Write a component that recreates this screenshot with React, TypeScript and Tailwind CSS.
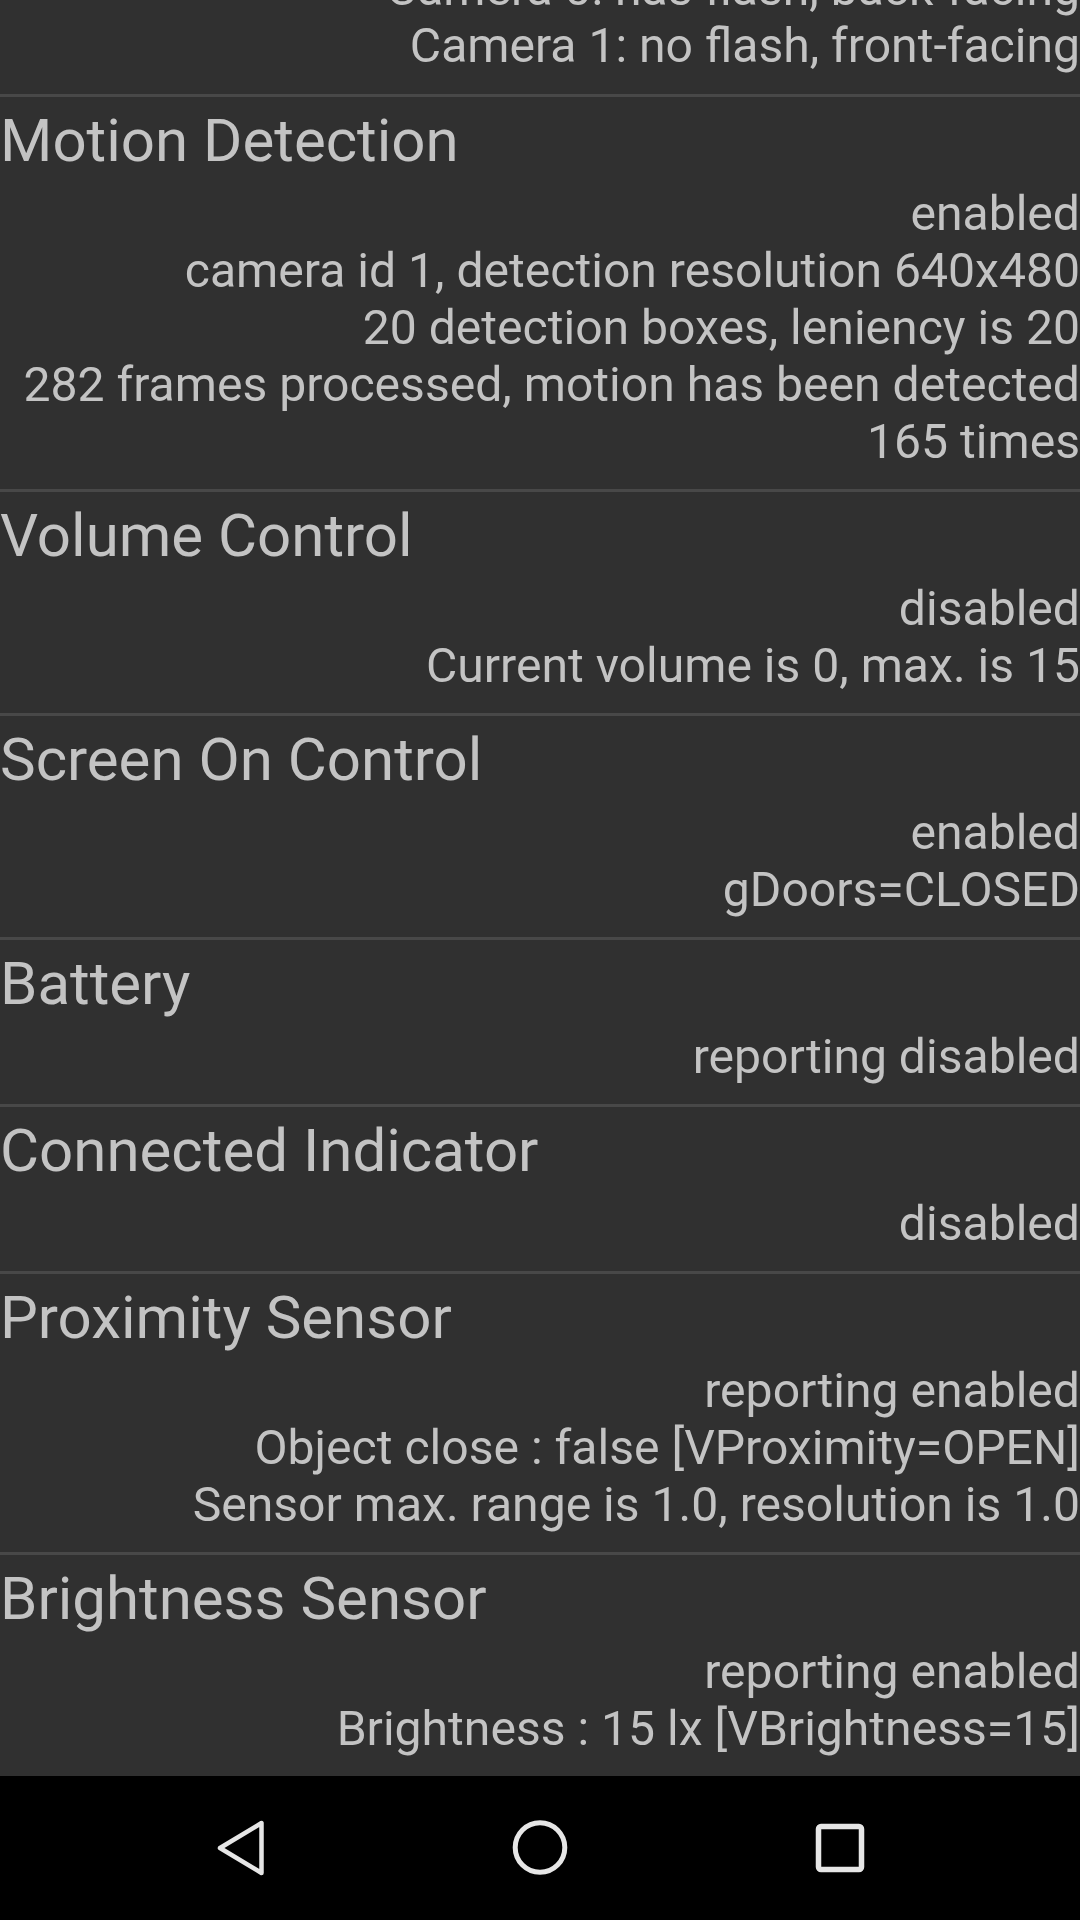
import React from "react";

type Section = { title: string; lines: string[] };

const sections: Section[] = [
  {
    title: "Motion Detection",
    lines: [
      "enabled",
      "camera id 1, detection resolution 640x480",
      "20 detection boxes, leniency is 20",
      "282 frames processed, motion has been detected",
      "165 times",
    ],
  },
  { title: "Volume Control", lines: ["disabled", "Current volume is 0, max. is 15"] },
  { title: "Screen On Control", lines: ["enabled", "gDoors=CLOSED"] },
  { title: "Battery", lines: ["reporting disabled"] },
  { title: "Connected Indicator", lines: ["disabled"] },
  {
    title: "Proximity Sensor",
    lines: [
      "reporting enabled",
      "Object close : false [VProximity=OPEN]",
      "Sensor max. range is 1.0, resolution is 1.0",
    ],
  },
  {
    title: "Brightness Sensor",
    lines: ["reporting enabled", "Brightness : 15 lx [VBrightness=15]"],
  },
];

function Body({ lines }: { lines: string[] }) {
  return (
    <div className="flex flex-col items-end text-right text-[48.1px] leading-[57px] text-[#c3c3c3]">
      {lines.map((l, i) => (
        <div key={i} className="whitespace-nowrap">
          {l}
        </div>
      ))}
    </div>
  );
}

function SectionBlock({ s }: { s: Section }) {
  return (
    <div className="flex flex-col">
      <div className="h-[3px] bg-[#484848]" />
      <div className="flex flex-col pt-[8px] pb-[19px]">
        <div className="text-[60px] leading-[71px] text-[#c3c3c3] whitespace-nowrap">
          {s.title}
        </div>
        <div className="mt-[9px]">
          <Body lines={s.lines} />
        </div>
      </div>
    </div>
  );
}

export default function App() {
  return (
    <div
      className="w-[1080px] h-[1920px] flex flex-col bg-black overflow-hidden"
      style={{ fontFamily: "Roboto, 'Noto Sans', sans-serif" }}
    >
      <div className="h-[1776px] bg-[#303030] overflow-hidden flex flex-col">
        <div className="-mt-[40px] pb-[20px]">
          <Body
            lines={["Camera 0: has flash, back-facing", "Camera 1: no flash, front-facing"]}
          />
        </div>
        {sections.map((s, i) => (
          <SectionBlock key={i} s={s} />
        ))}
      </div>
      <div className="h-[144px] bg-black flex flex-row justify-center items-center">
        <div className="w-[300px] h-[144px] flex items-center justify-center">
          <svg width="60" height="60" viewBox="0 0 60 60">
            <path
              d="M51.5 5 L51.5 55 L10 30 Z"
              fill="none"
              stroke="#e6e6e6"
              strokeWidth="4.5"
              strokeLinejoin="round"
            />
          </svg>
        </div>
        <div className="w-[300px] h-[144px] flex items-center justify-center">
          <svg width="60" height="60" viewBox="0 0 60 60">
            <circle cx="30" cy="29.5" r="24.8" fill="none" stroke="#e6e6e6" strokeWidth="5" />
          </svg>
        </div>
        <div className="w-[300px] h-[144px] flex items-center justify-center">
          <svg width="60" height="60" viewBox="0 0 60 60">
            <rect
              x="8.5"
              y="8.5"
              width="43"
              height="43"
              rx="2.5"
              fill="none"
              stroke="#e6e6e6"
              strokeWidth="5.5"
            />
          </svg>
        </div>
      </div>
    </div>
  );
}
